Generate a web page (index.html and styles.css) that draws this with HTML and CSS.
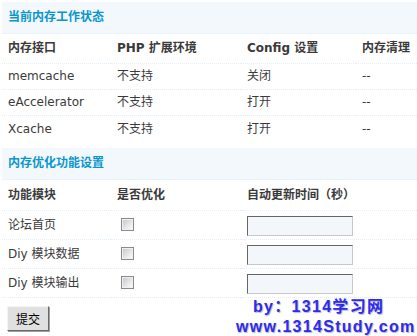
FILE: index.html
```html
<!DOCTYPE html>
<html lang="zh-CN">
<head>
<meta charset="utf-8">
<title>内存优化</title>
<link rel="stylesheet" href="styles.css">
</head>
<body>
<div class="page">
  <table class="tb tb-status">
    <colgroup><col class="c1"><col class="c2"><col class="c3"><col class="c4"></colgroup>
    <tr class="partition"><th colspan="4">当前内存工作状态</th></tr>
    <tr class="head"><th>内存接口</th><th>PHP 扩展环境</th><th>Config 设置</th><th>内存清理</th></tr>
    <tr class="row"><td>memcache</td><td>不支持</td><td>关闭</td><td>--</td></tr>
    <tr class="row"><td>eAccelerator</td><td>不支持</td><td>打开</td><td>--</td></tr>
    <tr class="row last"><td>Xcache</td><td>不支持</td><td>打开</td><td>--</td></tr>
  </table>

  <table class="tb tb-opt">
    <colgroup><col class="c1"><col class="c2"><col class="c3"><col class="c4"></colgroup>
    <tr class="partition"><th colspan="4">内存优化功能设置</th></tr>
    <tr class="head head2"><th>功能模块</th><th>是否优化</th><th colspan="2">自动更新时间（秒）</th></tr>
    <tr class="row2"><td>论坛首页</td><td><input type="checkbox" class="chk"></td><td colspan="2"><input type="text" class="txt"></td></tr>
    <tr class="row2"><td>Diy 模块数据</td><td><input type="checkbox" class="chk"></td><td colspan="2"><input type="text" class="txt"></td></tr>
    <tr class="row2"><td>Diy 模块输出</td><td><input type="checkbox" class="chk"></td><td colspan="2"><input type="text" class="txt"></td></tr>
  </table>

  <div class="actions"><button type="button" class="btn">提交</button></div>

  <div class="watermark">
    <div class="wm1">by：1314学习网</div>
    <div class="wm2">www.1314Study.com</div>
  </div>
</div>
</body>
</html>
```

FILE: styles.css
```css
html, body {
  margin: 0;
  padding: 0;
  background: #fff;
}

body {
  font-family: "DejaVu Sans", "Noto Sans CJK SC", sans-serif;
  font-size: 12px;
  color: #3a3a3a;
}

.page {
  position: relative;
  width: 417px;
  height: 336px;
  padding: 2px 0 0 2px;
  box-sizing: border-box;
  overflow: hidden;
}

.tb {
  width: 415px;
  table-layout: fixed;
  border-collapse: separate;
  border-spacing: 0;
}

.tb-status {
  margin-bottom: 6px;
}

.c1 { width: 109px; }
.c2 { width: 130px; }
.c3 { width: 115px; }
.c4 { width: 61px; }

.tb th,
.tb td {
  padding: 0 0 0 6px;
  text-align: left;
  vertical-align: middle;
  white-space: nowrap;
  border-bottom: 1px dotted #deeffb;
}

.partition th {
  background: #f2f8fc;
  color: #0a96cc;
  font-weight: bold;
  line-height: 31px;
  height: 31px;
}

.head th {
  font-weight: bold;
  color: #3a3a3a;
  line-height: 29px;
  height: 29px;
}

.head2 th {
  line-height: 30px;
  height: 30px;
}

.row td {
  line-height: 25px;
  height: 25px;
}

.row.last td {
  border-bottom: none;
  height: 26px;
  line-height: 26px;
}

.row2 td {
  height: 28px;
  line-height: 28px;
}

.chk {
  -webkit-appearance: none;
  appearance: none;
  display: inline-block;
  width: 13px;
  height: 13px;
  margin: 0 0 0 4px;
  vertical-align: middle;
  border: 1px solid #8a8a8a;
  box-sizing: border-box;
  box-shadow: inset 0 0 0 1px #f0f0f0;
  background: linear-gradient(135deg, #c4c4c8 0%, #e6e6ea 55%, #ffffff 100%);
  position: relative;
  top: -1px;
}

.txt {
  display: inline-block;
  width: 106px;
  height: 20px;
  box-sizing: border-box;
  margin: 0;
  padding: 0 2px;
  vertical-align: middle;
  background: #f3f7fc;
  border-style: solid;
  border-width: 1px;
  border-color: #666 #c8c8c8 #c8c8c8 #666;
  font-family: inherit;
  font-size: 12px;
}

.actions {
  padding: 8px 0 0 5px;
}

.btn {
  display: block;
  width: 42px;
  height: 25px;
  margin: 0;
  padding: 0;
  background: #e0e0e0;
  border-style: solid;
  border-width: 1px;
  border-color: #f4f4f4 #6a6a6a #6a6a6a #f4f4f4;
  box-shadow: 1px 1px 0 #a0a0a0;
  font-family: "Noto Sans CJK SC", sans-serif;
  font-size: 12px;
  color: #000;
  line-height: 23px;
}

.watermark {
  position: absolute;
  left: 236px;
  top: 297px;
  font-family: "Liberation Sans", "Noto Sans CJK SC", sans-serif;
  font-weight: bold;
  font-size: 16px;
  line-height: 20px;
  letter-spacing: 1.3px;
  color: #2c2cf0;
  text-shadow: 1px 1px 1px #b8b8c8;
  white-space: nowrap;
}

.wm1 {
  padding-left: 17px;
}
```
